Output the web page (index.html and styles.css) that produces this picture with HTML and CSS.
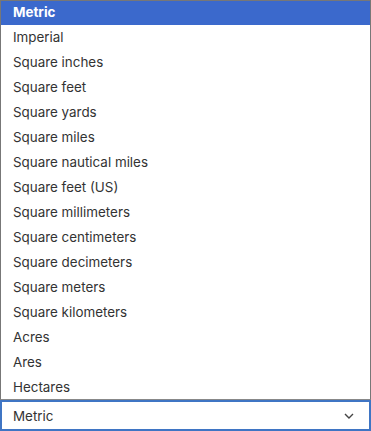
FILE: index.html
```html
<!DOCTYPE html>
<html lang="en">
<head>
    <meta charset="UTF-8">
    <meta name="viewport" content="width=device-width, initial-scale=1.0">
    <title>Units</title>
    <link rel="stylesheet" href="styles.css">
</head>
<body>
    <div class="dropdown">
        <ul class="options">
            <li class="selected">Metric</li>
            <li>Imperial</li>
            <li>Square inches</li>
            <li>Square feet</li>
            <li>Square yards</li>
            <li>Square miles</li>
            <li>Square nautical miles</li>
            <li>Square feet (US)</li>
            <li>Square millimeters</li>
            <li>Square centimeters</li>
            <li>Square decimeters</li>
            <li>Square meters</li>
            <li>Square kilometers</li>
            <li>Acres</li>
            <li>Ares</li>
            <li>Hectares</li>
        </ul>
        <div class="select-box">
            <span>Metric</span>
            <svg class="chevron" width="10" height="6" viewBox="0 0 10 6">
                <path d="M1 1 L5 5 L9 1" fill="none" stroke="#444" stroke-width="1.4"/>
            </svg>
        </div>
    </div>
</body>
</html>
```

FILE: styles.css
```css
body {
    margin: 0;
    font-family: Inter, "Noto Sans", sans-serif;
    font-size: 13.4px;
    color: #333;
    background: #fff;
}
.dropdown {
    width: 371px;
}
.options {
    list-style: none;
    margin: 0;
    padding: 0;
    border: 1px solid #777;
    border-bottom-color: #888;
}
.options li {
    height: 25px;
    line-height: 25px;
    padding-left: 12px;
}
.options li:first-child {
    height: 24px;
    line-height: 23px;
}
.options li:last-child {
    height: 24px;
}
.options li.selected {
    background: #3b69cc;
    color: #fff;
    font-weight: 700;
}
.select-box {
    height: 27px;
    border: 2px solid #3f75c4;
    display: flex;
    align-items: center;
    justify-content: space-between;
    padding: 0 15px 0 11px;
}
.chevron {
    display: block;
}
```
